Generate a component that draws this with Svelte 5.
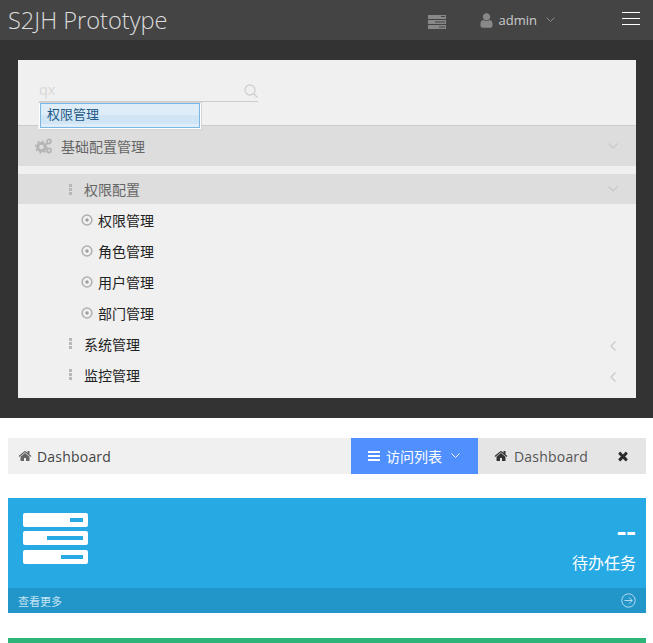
<script>
  const children = ["权限管理", "角色管理", "用户管理", "部门管理"];
  const groups = ["系统管理", "监控管理"];
  const homePath = "M1472 992v480q0 26-19 45t-45 19h-384v-384h-256v384h-384q-26 0-45-19t-19-45v-480q0-1 .5-3t.5-3l575-474 575 474q1 2 1 6zm223-69l-62 74q-8 9-21 11h-3q-13 0-21-7l-692-577-692 577q-12 8-24 7-13-2-21-11l-62-74q-8-10-7-23.500t11-21.500l719-599q32-26 76-26t76 26l244 204v-195q0-14 9-23t23-9h192q14 0 23 9t9 23v408l219 182q10 8 11 21.500t-7 23.500z";
</script>

<div class="page">
  <header class="topbar">
    <span class="brand">S2JH Prototype</span>
    <div class="top-right">
      <svg class="server-top" width="18" height="14" viewBox="0 0 18 14">
        <path fill="#888" d="M0 0h18v4H0zM0 5h18v4H0zM0 10h18v4H0z" />
        <path fill="#444" d="M13 1h4v1h-4zM7 6.500h10v1H7zM11 11.500h6v1h-6z" />
      </svg>
      <div class="user">
        <svg width="17" height="17" viewBox="0 0 1792 1792">
          <path fill="#888" d="M1536 1399q0 109-62.500 187t-150.500 78h-854q-88 0-150.500-78t-62.500-187q0-85 8.500-160.500t31.500-152 58.500-131 94-89 134.500-34.500q131 128 313 128t313-128q76 0 134.500 34.500t94 89 58.500 131 31.500 152 8.500 160.500zm-256-887q0 159-112.500 271.500t-271.500 112.500-271.500-112.500-112.500-271.500 112.500-271.500 271.500-112.500 271.500 112.500 112.500 271.500z" />
        </svg>
        <span>admin</span>
        <svg class="chev" width="9" height="6" viewBox="0 0 9 6"><path d="M.5.500 4.500 4.500 8.500.5" fill="none" stroke="#8a8a8a" /></svg>
      </div>
      <div class="burger"><i></i><i></i><i></i></div>
    </div>
  </header>

  <div class="dark">
    <nav class="panel">
      <div class="search">
        <div class="search-box">
          <span class="query">qx</span>
          <svg class="search-icon" width="14" height="14" viewBox="0 0 14 14">
            <circle cx="6" cy="6" r="5" fill="none" stroke="#d0d0d0" stroke-width="1.300" />
            <path d="m9.500 9.500 4 4" stroke="#d0d0d0" stroke-width="1.500" />
          </svg>
        </div>
        <div class="suggest"><div class="suggest-item">权限管理</div></div>
      </div>

      <div class="root-item">
        <svg class="cogs" width="18" height="16" viewBox="0 0 18 16">
          <circle cx="6.500" cy="9" r="3.800" fill="none" stroke="#b5b5b5" stroke-width="3" />
          <circle cx="6.500" cy="9" r="5.800" fill="none" stroke="#b5b5b5" stroke-width="1.500" stroke-dasharray="2 2.500" />
          <circle cx="14" cy="3.500" r="2" fill="none" stroke="#b5b5b5" stroke-width="1.800" />
          <circle cx="14" cy="12.500" r="2" fill="none" stroke="#b5b5b5" stroke-width="1.800" />
        </svg>
        <span>基础配置管理</span>
        <svg class="arrow" width="10" height="6" viewBox="0 0 10 6"><path d="M.5.500 5 5 9.500.5" fill="none" stroke="#c8c8c8" stroke-width="1.200" /></svg>
      </div>

      <div class="sub-list">
        <div class="group open">
          <span class="dots"><i></i><i></i><i></i></span>
          <span>权限配置</span>
          <svg class="arrow" width="10" height="6" viewBox="0 0 10 6"><path d="M.5.500 5 5 9.500.5" fill="none" stroke="#c8c8c8" stroke-width="1.200" /></svg>
        </div>
        {#each children as child}
          <div class="leaf">
            <svg width="12" height="12" viewBox="0 0 12 12">
              <circle cx="6" cy="6" r="4.900" fill="none" stroke="#b0b0b0" stroke-width="1.500" />
              <circle cx="6" cy="6" r="1.700" fill="#a0a0a0" />
            </svg>
            <span>{child}</span>
          </div>
        {/each}
        {#each groups as group}
          <div class="group closed">
            <span class="dots"><i></i><i></i><i></i></span>
            <span>{group}</span>
            <svg class="arrow" width="6" height="10" viewBox="0 0 6 10"><path d="M5.500.5 1 5l4.500 4.500" fill="none" stroke="#c8c8c8" stroke-width="1.200" /></svg>
          </div>
        {/each}
      </div>
    </nav>
  </div>

  <main class="content">
    <div class="tabs">
      <div class="crumb">
        <svg width="14" height="14" viewBox="0 0 1792 1792"><path fill="#666" d={homePath} /></svg>
        <span>Dashboard</span>
      </div>
      <div class="visit">
        <span class="bars"><i></i><i></i><i></i></span>
        <span>访问列表</span>
        <svg class="visit-chev" width="9" height="6" viewBox="0 0 9 6"><path d="M.5.500 4.500 4.500 8.500.5" fill="none" stroke="#fff" /></svg>
      </div>
      <div class="active-tab">
        <svg width="14" height="14" viewBox="0 0 1792 1792"><path fill="#333" d={homePath} /></svg>
        <span>Dashboard</span>
        <svg class="close" width="14" height="14" viewBox="0 0 1792 1792">
          <path fill="#2b2b2b" d="M1490 1322q0 40-28 68l-136 136q-28 28-68 28t-68-28l-294-294-294 294q-28 28-68 28t-68-28l-136-136q-28-28-28-68t28-68l294-294-294-294q-28-28-28-68t28-68l136-136q28-28 68-28t68 28l294 294 294-294q28-28 68-28t68 28l136 136q28 28 28 68t-28 68l-294 294 294 294q28 28 28 68z" />
        </svg>
      </div>
    </div>

    <section class="stat">
      <div class="stat-body">
        <svg width="65" height="51" viewBox="0 0 65 51">
          <rect y="0" width="65" height="14" rx="2" fill="#fff" />
          <rect y="18" width="65" height="14" rx="2" fill="#fff" />
          <rect y="37" width="65" height="14" rx="2" fill="#fff" />
          <path fill="#27a9e3" d="M47 5h13v4H47zM24 23h36v4H24zM38 42h22v4H38z" />
        </svg>
        <div class="stat-text">
          <div class="num">--</div>
          <div class="desc">待办任务</div>
        </div>
      </div>
      <div class="stat-foot">
        <span>查看更多</span>
        <svg width="15" height="15" viewBox="0 0 15 15" fill="none" stroke="#b4dcf0">
          <circle cx="7.500" cy="7.500" r="6.700" />
          <path d="M3.500 7.500h7.500M8 4.300l3.200 3.200L8 10.700" />
        </svg>
      </div>
    </section>

    <div class="green"></div>
  </main>
</div>

<style>
  :global(body) {
    margin: 0;
    background: #fff;
    overflow: hidden;
  }

  .page {
    height: 643px;
    overflow: hidden;
    font-family: "Open Sans", "Noto Sans CJK SC", sans-serif;
    font-size: 14px;
    color: #333;
  }

  .topbar {
    height: 40px;
    background: #444;
    display: flex;
    align-items: center;
    justify-content: space-between;
    padding: 0 13px 0 8px;
  }

  .brand {
    font-size: 23.600px;
    font-weight: 300;
    line-height: 40px;
    color: #ddd;
  }

  .top-right {
    display: flex;
    align-items: center;
  }

  .server-top {
    display: block;
    margin-right: 32px;
    margin-top: 4px;
  }

  .user {
    display: flex;
    align-items: center;
    gap: 4px;
    color: #ccc;
    font-size: 13px;
    margin-right: 67px;
  }

  .user .chev {
    margin-left: 5px;
  }

  .burger {
    width: 18px;
    display: flex;
    flex-direction: column;
    gap: 5px;
    margin-top: -4px;
  }

  .burger i {
    height: 1px;
    background: #fff;
  }

  .dark {
    height: 378px;
    box-sizing: border-box;
    background: #333;
    padding: 20px 17px 20px 18px;
  }

  .panel {
    height: 338px;
    background: #f0f0f0;
  }

  .search {
    position: relative;
    height: 66px;
    box-sizing: border-box;
    padding: 20px 0 0 21px;
    border-bottom: 1px solid #ccc;
  }

  .search-box {
    width: 219px;
    height: 22px;
    box-sizing: border-box;
    border-bottom: 1px solid #ccc;
    display: flex;
    align-items: flex-end;
    justify-content: space-between;
    padding: 0 0 2px;
    color: #d8d8d8;
    font-size: 14.500px;
    line-height: 18px;
  }

  .search-icon {
    margin-bottom: 1px;
  }

  .suggest {
    position: absolute;
    left: 20px;
    top: 42px;
    width: 164px;
    height: 28px;
    box-sizing: border-box;
    background: #fff;
    border: 1px solid #d5d5d5;
    border-left-color: #eee;
    padding: 0 1px 1px 1px;
    z-index: 2;
  }

  .suggest-item {
    height: 100%;
    box-sizing: border-box;
    border: 1px solid #79b7e7;
    background: linear-gradient(#deedf7 0, #deedf7 50%, #d0e5f5 50%, #d0e5f5 85%, #deedf7 85%);
    color: #1d5987;
    font-size: 13px;
    line-height: 21px;
    padding-left: 6px;
  }

  .root-item {
    height: 40px;
    background: #ddd;
    display: flex;
    align-items: center;
    padding: 0 18px 0 17px;
    color: #666;
    font-size: 14px;
  }

  .cogs {
    margin-right: 8px;
  }

  .arrow {
    margin-left: auto;
  }

  .sub-list {
    padding-top: 8px;
  }

  .group {
    height: 31px;
    display: flex;
    align-items: center;
    padding: 0 18px 0 51px;
    color: #222;
  }

  .group.open {
    height: 30px;
    background: #ddd;
    color: #666;
  }

  .group.closed {
    padding-right: 20px;
  }

  .group.closed .arrow {
    margin-top: 4px;
  }

  .dots {
    display: flex;
    flex-direction: column;
    gap: 1px;
    width: 3px;
    margin-right: 12px;
  }

  .dots i {
    height: 3px;
    background: #b8b8b8;
  }

  .leaf {
    height: 31px;
    display: flex;
    align-items: center;
    gap: 5px;
    padding-left: 63px;
    color: #222;
  }

  .content {
    padding: 20px 7px 0 8px;
  }

  .tabs {
    height: 36px;
    display: flex;
    background: #f0f0f0;
    letter-spacing: 0.2px;
  }

  .crumb {
    flex: 1;
    display: flex;
    align-items: center;
    gap: 5px;
    padding-left: 10px;
    color: #444;
  }

  .visit {
    width: 127px;
    box-sizing: border-box;
    display: flex;
    align-items: center;
    gap: 6px;
    padding-left: 17px;
    background: #4f90fe;
    color: #fff;
    letter-spacing: 0;
  }

  .visit-chev {
    margin-left: 3px;
  }

  .bars {
    width: 12px;
    display: flex;
    flex-direction: column;
    gap: 2px;
  }

  .bars i {
    height: 2px;
    background: #fff;
  }

  .active-tab {
    width: 168px;
    box-sizing: border-box;
    display: flex;
    align-items: center;
    gap: 6px;
    padding-left: 16px;
    background: #e5e5e5;
    color: #555;
  }

  .close {
    margin-left: 22px;
  }

  .stat {
    margin-top: 24px;
    background: #27a9e3;
  }

  .stat-body {
    height: 90px;
    box-sizing: border-box;
    display: flex;
    justify-content: space-between;
    padding: 15px 10px 0 15px;
    color: #fff;
  }

  .stat-text {
    text-align: right;
  }

  .num {
    font-size: 30px;
    font-weight: 600;
    line-height: 30px;
    margin-top: 3px;
  }

  .desc {
    font-size: 16px;
    line-height: 24px;
    margin-top: 5px;
  }

  .stat-foot {
    height: 25px;
    display: flex;
    align-items: center;
    justify-content: space-between;
    padding: 0 10px;
    background: #2295c9;
    color: #c6e4f3;
    font-size: 11px;
  }

  .green {
    margin-top: 25px;
    height: 5px;
    background: #2db479;
  }
</style>
